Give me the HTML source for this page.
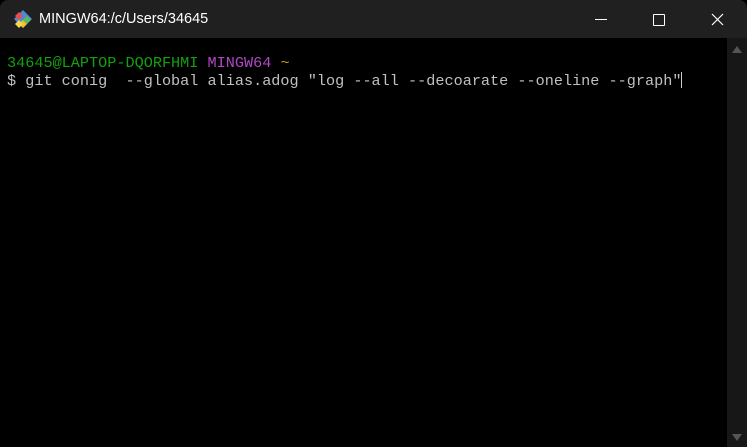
<!DOCTYPE html>
<html><head><style>
body{margin:0;width:747px;height:447px;background:#000;overflow:hidden;position:relative;font-family:"Liberation Sans",sans-serif}
.title{position:absolute;left:0;top:0;width:747px;height:38px;background:#202020;border-radius:8px 8px 0 0}
.t{position:absolute;left:39px;top:11px;color:#fff;font-size:14.5px}
.term{position:absolute;left:7px;top:54px;font-family:"Liberation Mono",monospace;font-size:15.2px;line-height:18px;color:#c0c0c0;white-space:pre}
.g{color:#13a10e}.m{color:#b148c6}.y{color:#c19c00}
.sb{position:absolute;left:727px;top:38px;width:20px;height:409px;background:#171717}
.cur{display:inline-block;width:1px;height:16px;background:#ccc;vertical-align:-3px}
</style></head><body>
<div class="title">
<svg style="position:absolute;left:13px;top:10px" width="20" height="18" viewBox="0 0 20 18">
<polygon points="10,0 19,9 10,18 1,9" fill="#4a8ad8"/>
<polygon points="6,2 10,6 6,10 2,6" fill="#e84c4c"/>
<polygon points="10,10 14,14 10,18 6,14" fill="#f0c030"/>
<polygon points="14,6 18,10 14,14 10,10" fill="#5cb85c"/>
<polygon points="6,10 10,14 6,18 2,14" fill="#f5d64a"/>
</svg>
<div class="t">MINGW64:/c/Users/34645</div>
<div style="position:absolute;left:595px;top:19px;width:12px;height:1px;background:#fff"></div>
<div style="position:absolute;left:653px;top:14px;width:10px;height:10px;border:1px solid #fff;border-radius:1px"></div>
<svg style="position:absolute;left:711px;top:13px" width="13" height="13"><path d="M1 1L12 12M12 1L1 12" stroke="#fff" stroke-width="1.2"/></svg>
</div>
<div class="term"><span class="g">34645@LAPTOP-DQORFHMI</span> <span class="m">MINGW64</span> <span class="y">~</span>
$ git conig  --global alias.adog "log --all --decoarate --oneline --graph"<span class="cur"></span></div>
<div class="sb">
<svg style="position:absolute;left:5px;top:8px" width="10" height="7"><polygon points="5,0 10,7 0,7" fill="#555"/></svg>
<svg style="position:absolute;left:5px;top:396px" width="10" height="7"><polygon points="0,0 10,0 5,7" fill="#555"/></svg>
</div>
</body></html>
